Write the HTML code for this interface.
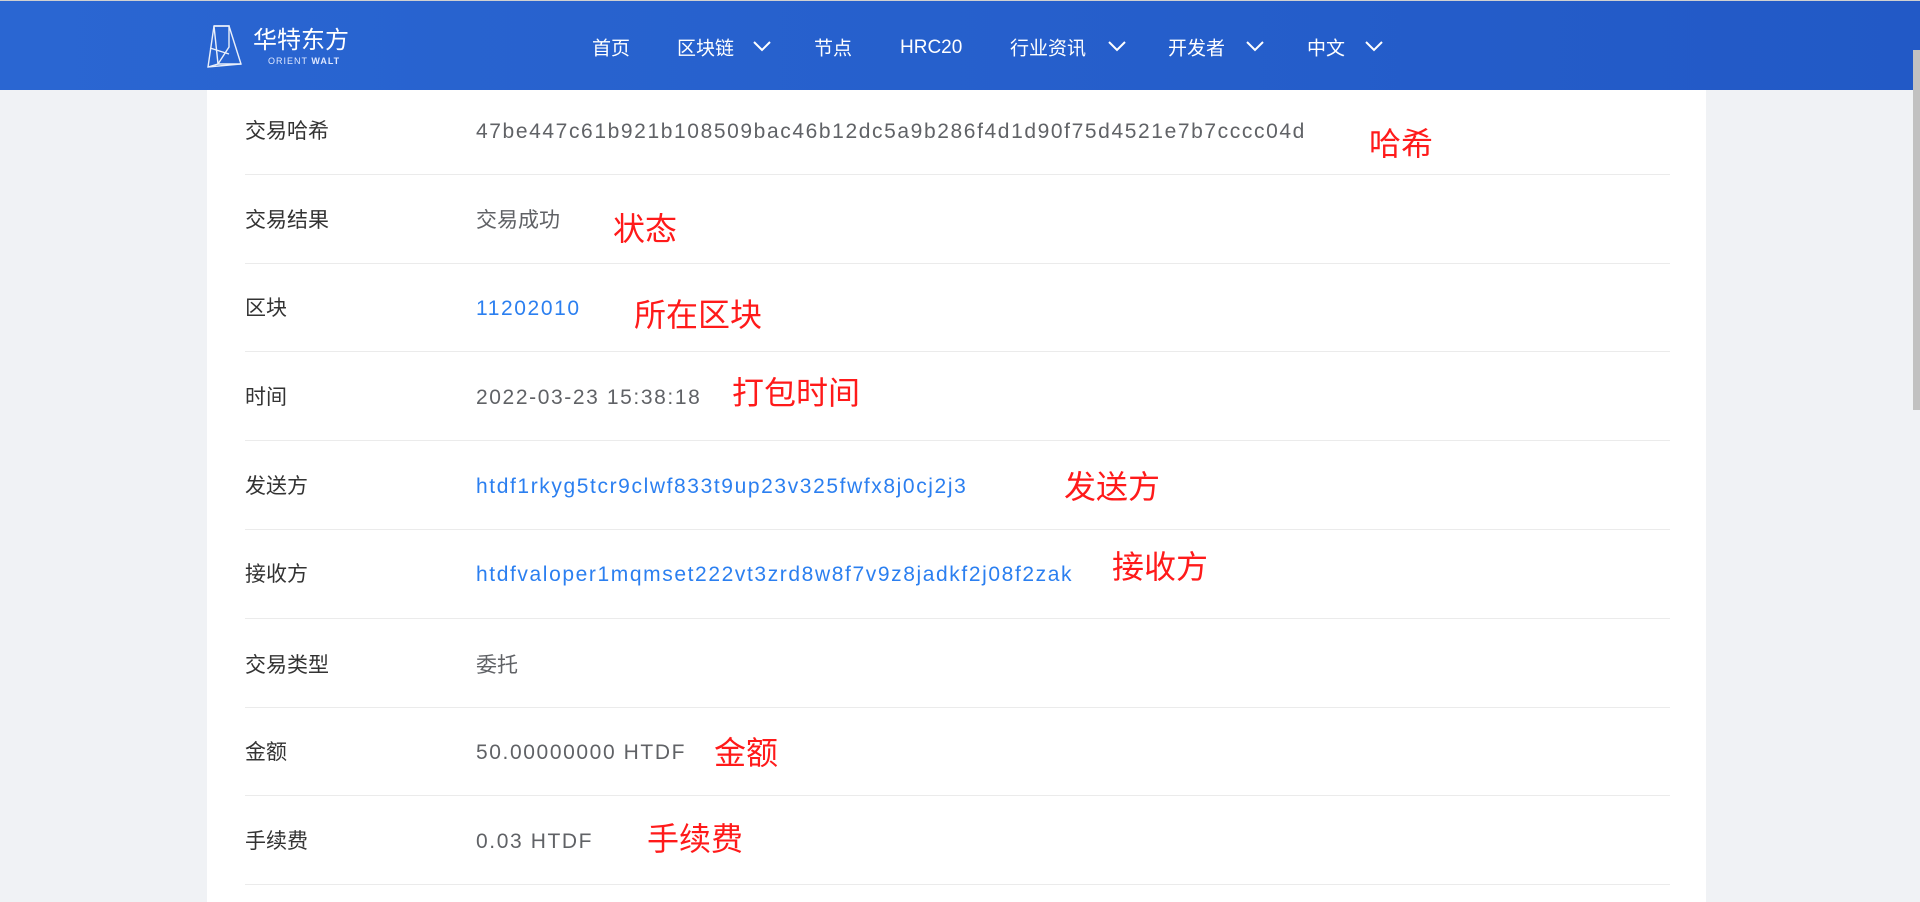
<!DOCTYPE html>
<html><head><meta charset="utf-8"><style>
*{margin:0;padding:0;box-sizing:border-box}
body{width:1920px;height:902px;overflow:hidden;background:#f0f2f5;font-family:"Liberation Sans","Noto Sans CJK SC",sans-serif;position:relative}
.hdr{position:absolute;left:0;top:0;width:1920px;height:90px;background:linear-gradient(90deg,#2a66d2,#2259c6);border-top:1px solid #d0d0d0}
.nav{position:absolute;top:46px;transform:translateY(-50%);color:#fff;font-size:19px;white-space:nowrap}
.chev{position:absolute;top:38px}
.panel{position:absolute;left:207px;top:90px;width:1499px;height:812px;background:#fff}
.sb{position:absolute;right:0;top:50px;width:7px;height:360px;background:#c1c1c1}
.row{position:absolute;left:245px;width:1425px;border-bottom:1px solid #ebebeb}
.t{position:absolute;font-size:21px;line-height:30px;white-space:nowrap;margin-top:2px}
.l{left:245px;color:#333}
.v{left:476px;color:#606266}
.n{letter-spacing:1.6px}
.b{color:#2b7ff0}
.r{position:absolute;color:#ff1a1a;font-size:32px;line-height:40px;white-space:nowrap}
</style></head><body>
<div class="hdr">
<svg style="position:absolute;left:205px;top:23px" width="40" height="46" viewBox="0 0 40 46" fill="none" stroke="#fff" stroke-width="1.4" opacity="0.9"><path d="M9 2 L24 2 L36 40 L3 43 Z"/><path d="M9 2 L13 40 L36 40"/><path d="M9 2 L24 2 L24 23 L13 40"/><path d="M3 43 L13 40"/><path d="M5 24 L24 30"/></svg>
<div style="position:absolute;left:253px;top:26px;color:#fff;font-size:24px;line-height:28px">华特东方</div>
<div style="position:absolute;left:268px;top:55px;color:#dfe8ff;font-size:9px;letter-spacing:1px;line-height:10px">ORIENT <b>WALT</b></div>
<div class="nav" style="left:592px">首页</div>
<div class="nav" style="left:677px">区块链</div>
<div class="nav" style="left:814px">节点</div>
<div class="nav" style="left:900px;top:47px">HRC20</div>
<div class="nav" style="left:1010px">行业资讯</div>
<div class="nav" style="left:1168px">开发者</div>
<div class="nav" style="left:1307px">中文</div>
<svg class="chev" style="left:752px" width="20" height="14" viewBox="0 0 20 14"><path d="M2 3 L10 11 L18 3" stroke="#fff" stroke-width="2" fill="none"/></svg>
<svg class="chev" style="left:1107px" width="20" height="14" viewBox="0 0 20 14"><path d="M2 3 L10 11 L18 3" stroke="#fff" stroke-width="2" fill="none"/></svg>
<svg class="chev" style="left:1245px" width="20" height="14" viewBox="0 0 20 14"><path d="M2 3 L10 11 L18 3" stroke="#fff" stroke-width="2" fill="none"/></svg>
<svg class="chev" style="left:1364px" width="20" height="14" viewBox="0 0 20 14"><path d="M2 3 L10 11 L18 3" stroke="#fff" stroke-width="2" fill="none"/></svg>
</div>
<div class="panel"></div>
<div class="sb"></div>

<div class="row" style="top:90px;height:85px"></div>
<div class="row" style="top:175px;height:89px"></div>
<div class="row" style="top:264px;height:88px"></div>
<div class="row" style="top:352px;height:89px"></div>
<div class="row" style="top:441px;height:89px"></div>
<div class="row" style="top:530px;height:89px"></div>
<div class="row" style="top:619px;height:89px"></div>
<div class="row" style="top:708px;height:88px"></div>
<div class="row" style="top:796px;height:89px"></div>

<div class="t l" style="top:115px">交易哈希</div>
<div class="t v n" style="top:115px">47be447c61b921b108509bac46b12dc5a9b286f4d1d90f75d4521e7b7cccc04d</div>
<div class="t l" style="top:204px">交易结果</div>
<div class="t v" style="top:204px">交易成功</div>
<div class="t l" style="top:292px">区块</div>
<div class="t v b n" style="top:292px">11202010</div>
<div class="t l" style="top:381px">时间</div>
<div class="t v n" style="top:381px">2022-03-23 15:38:18</div>
<div class="t l" style="top:470px">发送方</div>
<div class="t v b n" style="top:470px">htdf1rkyg5tcr9clwf833t9up23v325fwfx8j0cj2j3</div>
<div class="t l" style="top:558px">接收方</div>
<div class="t v b n" style="top:558px">htdfvaloper1mqmset222vt3zrd8w8f7v9z8jadkf2j08f2zak</div>
<div class="t l" style="top:649px">交易类型</div>
<div class="t v" style="top:649px">委托</div>
<div class="t l" style="top:736px">金额</div>
<div class="t v n" style="top:736px">50.00000000 HTDF</div>
<div class="t l" style="top:825px">手续费</div>
<div class="t v n" style="top:825px">0.03 HTDF</div>

<div class="r" style="left:1369px;top:124px">哈希</div>
<div class="r" style="left:613px;top:209px">状态</div>
<div class="r" style="left:634px;top:295px">所在区块</div>
<div class="r" style="left:732px;top:373px">打包时间</div>
<div class="r" style="left:1064px;top:467px">发送方</div>
<div class="r" style="left:1112px;top:547px">接收方</div>
<div class="r" style="left:714px;top:733px">金额</div>
<div class="r" style="left:647px;top:819px">手续费</div>
</body></html>
